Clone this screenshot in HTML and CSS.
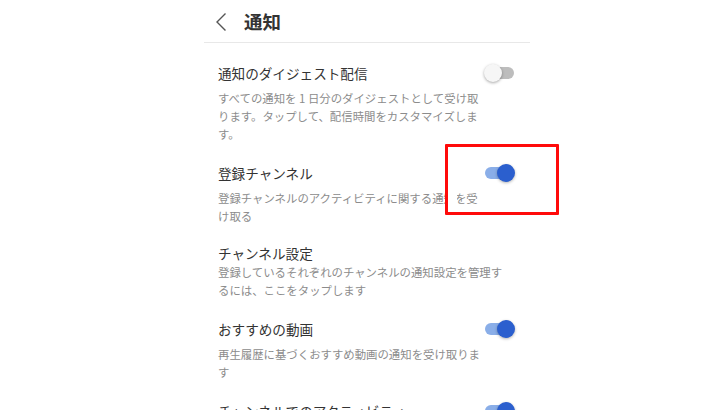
FILE: index.html
```html
<!DOCTYPE html>
<html lang="ja">
<head>
<meta charset="utf-8">
<link rel="stylesheet" href="styles.css">
</head>
<body>
<div class="screen">
  <header class="topbar">
    <svg class="back" width="12" height="20" viewBox="0 0 12 20"><polyline points="10.5,1.5 2,10 10.5,18.5" fill="none" stroke="#555" stroke-width="1.4"/></svg>
    <h1 class="title">通知</h1>
  </header>
  <div class="list">
    <div class="item">
      <div class="row">
        <div class="label">通知のダイジェスト配信</div>
        <div class="switch off"><span class="track"></span><span class="knob"></span></div>
      </div>
      <div class="desc">すべての通知を 1 日分のダイジェストとして受け取<br>ります。タップして、配信時間をカスタマイズしま<br>す。</div>
    </div>
    <div class="item">
      <div class="row">
        <div class="label">登録チャンネル</div>
        <div class="switch on"><span class="track"></span><span class="knob"></span></div>
      </div>
      <div class="desc">登録チャンネルのアクティビティに関する通知を受<br>け取る</div>
    </div>
    <div class="item plain">
      <div class="row">
        <div class="label">チャンネル設定</div>
      </div>
      <div class="desc">登録しているそれぞれのチャンネルの通知設定を管理す<br>るには、ここをタップします</div>
    </div>
    <div class="item">
      <div class="row">
        <div class="label">おすすめの動画</div>
        <div class="switch on"><span class="track"></span><span class="knob"></span></div>
      </div>
      <div class="desc">再生履歴に基づくおすすめ動画の通知を受け取りま<br>す</div>
    </div>
    <div class="item">
      <div class="row">
        <div class="label">チャンネルでのアクティビティ</div>
        <div class="switch on"><span class="track"></span><span class="knob"></span></div>
      </div>
      <div class="desc">チャンネルでのアクティビティに関する通知を受け取る</div>
    </div>
  </div>
</div>
<div class="highlight"><span class="mask"></span></div>
</body>
</html>
```

FILE: styles.css
```css
html, body {
  margin: 0;
  padding: 0;
  background: #ffffff;
  overflow: hidden;
}
body {
  width: 728px;
  height: 410px;
  position: relative;
  font-family: "Noto Sans CJK JP", "Noto Sans", sans-serif;
}
.screen {
  width: 326px;
  margin-left: 204px;
}
.topbar {
  height: 42px;
  border-bottom: 1px solid #e8e8e8;
  display: flex;
  align-items: center;
  padding-left: 11px;
}
.back {
  display: block;
  margin-top: 1px;
}
.title {
  margin: 0 0 0 17px;
  font-size: 18.5px;
  font-weight: 700;
  color: #333333;
  line-height: 1;
}
.list {
  padding: 0 15px 0 14px;
}
.item {
  padding-top: 18px;
}
.row {
  display: flex;
  align-items: center;
  justify-content: space-between;
  height: 24px;
}
.plain .row {
  height: 19px;
}
.label {
  font-size: 13.6px;
  color: #333333;
  white-space: nowrap;
}
.desc {
  margin-top: 4px;
  font-size: 11.4px;
  line-height: 18px;
  color: #8c8c8c;
  white-space: nowrap;
}
.plain .desc {
  margin-top: 1px;
}
.switch {
  position: relative;
  width: 31px;
  height: 18px;
  flex: none;
}
.track {
  position: absolute;
  left: 1px;
  right: 1px;
  top: 3px;
  height: 12px;
  border-radius: 6px;
}
.knob {
  position: absolute;
  top: 0;
  width: 18px;
  height: 18px;
  border-radius: 50%;
}
.off .track { background: #bdbdbd; }
.off .knob {
  left: 0;
  background: #f6f6f6;
  box-shadow: 0 1px 3px rgba(0,0,0,0.35);
}
.on .track { background: #8aaee8; }
.on .knob {
  right: 0;
  background: #2b5fce;
  box-shadow: 0 1px 3px rgba(0,0,0,0.3);
}
.highlight {
  position: absolute;
  left: 445px;
  top: 144px;
  width: 108px;
  height: 65px;
  border: 3px solid #ff0a0a;
  border-radius: 1px;
}
.mask {
  position: absolute;
  left: 0;
  top: 46px;
  width: 9px;
  height: 17px;
  background: #ffffff;
}
```
